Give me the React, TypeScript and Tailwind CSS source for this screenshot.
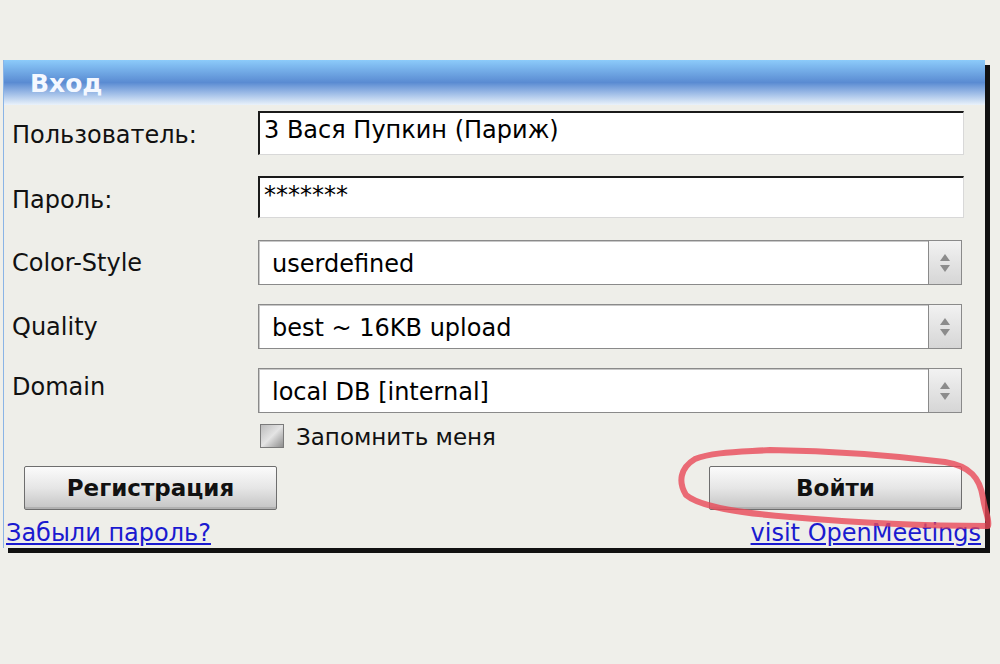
const font = { fontFamily: '"DejaVu Sans", Verdana, sans-serif' };

function TextField({ value }: { value: string }) {
  return (
    <div className="h-full w-[706px] bg-white border-t-2 border-l-2 border-t-[#1a1a1a] border-l-[#1a1a1a] border-b border-r border-b-[#d8d8d8] border-r-[#d8d8d8] pl-[4px] pt-[3px] text-[24px] leading-[28px] text-black">
      {value}
    </div>
  );
}

function SelectField({ value }: { value: string }) {
  return (
    <div className="h-full w-[704px] flex bg-white border border-[#8a8a8a] shadow-[inset_1px_1px_0_#c8c8c8]">
      <div className="flex-1 flex items-center pl-[13px] pt-[3px] text-[24px] text-black">{value}</div>
      <div className="w-[33px] border-l border-[#8a8a8a] bg-gradient-to-b from-[#f2f2f2] to-[#d6d6d6] flex flex-col items-center justify-center gap-[4px]">
        <svg width="10" height="7" viewBox="0 0 10 7">
          <path d="M5 0 L10 7 L0 7 Z" fill="#8c8c8c" />
        </svg>
        <svg width="10" height="7" viewBox="0 0 10 7">
          <path d="M0 0 L10 0 L5 7 Z" fill="#8c8c8c" />
        </svg>
      </div>
    </div>
  );
}

function Button({ label }: { label: string }) {
  return (
    <div className="w-[253px] h-[44px] flex items-center justify-center border border-[#6e6e6e] rounded-[2px] bg-gradient-to-b from-[#fbfbfb] via-[#e6e6e6] to-[#c4c4c4] shadow-[inset_0_-2px_0_#b0b0b0] text-[23px] font-bold text-[#111]">
      {label}
    </div>
  );
}

export default function App() {
  return (
    <div className="relative w-[1000px] h-[664px] bg-[#efefea] pt-[60px] pl-[3px]" style={font}>
      <div className="w-[982px] h-[488px] bg-[#eeeee9] border-l border-[#8ab4e6] shadow-[5px_5px_0_#111] flex flex-col">
        <div className="h-[45px] bg-gradient-to-b from-[#8ccbfa] via-[#5a8bd2] to-[#eaf2fa] flex items-center pl-[26px] pt-[3px] text-[25px] font-bold text-[#f4f8ff]">
          Вход
        </div>

        <div className="mt-[6px] h-[44px] flex">
          <div className="w-[254px] pl-[8px] pt-[10px] text-[24px] leading-[28px] text-[#111]">Пользователь:</div>
          <TextField value="3 Вася Пупкин (Париж)" />
        </div>

        <div className="mt-[21px] h-[42px] flex">
          <div className="w-[254px] pl-[8px] pt-[10px] text-[24px] leading-[28px] text-[#111]">Пароль:</div>
          <TextField value="*******" />
        </div>

        <div className="mt-[22px] h-[45px] flex">
          <div className="w-[254px] pl-[8px] pt-[9px] text-[24px] leading-[28px] text-[#111]">Color-Style</div>
          <SelectField value="userdefined" />
        </div>

        <div className="mt-[19px] h-[45px] flex">
          <div className="w-[254px] pl-[8px] pt-[9px] text-[24px] leading-[28px] text-[#111]">Quality</div>
          <SelectField value="best ~ 16KB upload" />
        </div>

        <div className="mt-[19px] h-[45px] flex">
          <div className="w-[254px] pl-[8px] pt-[5px] text-[24px] leading-[28px] text-[#111]">Domain</div>
          <SelectField value="local DB [internal]" />
        </div>

        <div className="mt-[11px] h-[24px] flex items-center pl-[256px] gap-[12px]">
          <div className="w-[24px] h-[24px] border border-[#7a7a7a] bg-gradient-to-br from-[#bcbcbc] via-[#e4e4e4] to-[#8e8e8e]" />
          <span className="text-[23px] pt-[3px] text-[#111]">Запомнить меня</span>
        </div>

        <div className="mt-[18px] flex justify-between pl-[20px] pr-[23px]">
          <Button label="Регистрация" />
          <Button label="Войти" />
        </div>

        <div className="mt-[10px] flex justify-between pl-[2px] pr-[4px] text-[24px] text-[#1a1ad0] underline leading-[26px]">
          <span>Забыли пароль?</span>
          <span>visit OpenMeetings</span>
        </div>
      </div>

      <svg className="absolute left-0 top-0 pointer-events-none" width="1000" height="664" viewBox="0 0 1000 664">
        <path
          d="M770 450 C830 451 890 455 945 462 C970 466 980 478 983 498 C985 512 990 520 988 526 C930 526 860 523 790 517 C740 513 700 507 686 495 C678 482 680 468 695 459 C712 452 740 452 770 450 Z"
          fill="none"
          stroke="#e84858"
          strokeOpacity="0.8"
          strokeWidth="6"
          strokeLinejoin="round"
        />
      </svg>
    </div>
  );
}
